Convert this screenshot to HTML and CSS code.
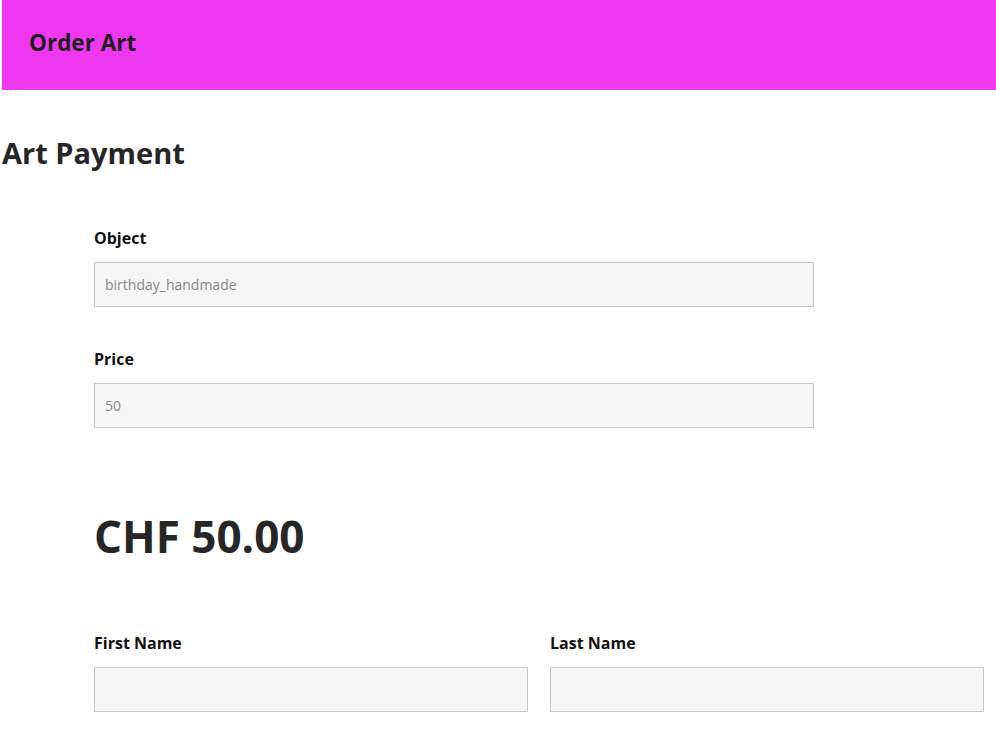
FILE: index.html
```html
<!DOCTYPE html>
<html lang="en">
<head>
  <meta charset="UTF-8">
  <meta name="viewport" content="width=device-width, initial-scale=1.0">
  <title>Order Art</title>
  <link rel="stylesheet" href="styles.css">
</head>
<body>
  <header class="topbar">
    <span class="topbar-title">Order Art</span>
  </header>

  <main class="page">
    <h1 class="page-title">Art Payment</h1>

    <form class="payment-form">
      <div class="field">
        <label for="object">Object</label>
        <input type="text" id="object" value="birthday_handmade" readonly>
      </div>

      <div class="field">
        <label for="price">Price</label>
        <input type="text" id="price" value="50" readonly>
      </div>

      <div class="amount">CHF 50.00</div>

      <!-- Dados do comprador -->
      <div class="name-row">
        <div class="field">
          <label for="firstName">First Name</label>
          <input type="text" id="firstName">
        </div>
        <div class="field">
          <label for="lastName">Last Name</label>
          <input type="text" id="lastName">
        </div>
      </div>
    </form>
  </main>
</body>
</html>
```

FILE: styles.css
```css
body {
  margin: 0;
  padding: 0;
  font-family: 'Open Sans', 'Liberation Sans', sans-serif;
  background-color: white;
  color: #262626;
}
.topbar {
  margin-left: 2px;
  height: 90px;
  padding: 31px 27px 0;
  box-sizing: border-box;
  background-color: #f037f0;
}
.topbar-title {
  display: block;
  font-size: 22.5px;
  line-height: 23px;
  font-weight: bold;
  color: #1f1f1f;
}
.page {
  padding-left: 2px;
}
.page-title {
  margin: 45px 0 0;
  font-size: 29px;
  line-height: 36px;
  font-weight: bold;
}
.payment-form {
  margin-left: 92px;
  padding-top: 56px;
}
.field {
  width: 720px;
  margin-bottom: 41px;
}
label {
  display: block;
  margin-bottom: 13px;
  font-size: 16px;
  line-height: 22px;
  font-weight: bold;
  color: #111;
}
input {
  display: block;
  width: 100%;
  height: 45px;
  padding: 0 10px;
  border: 1px solid #c8c8c8;
  background-color: #f6f6f6;
  font-family: inherit;
  font-size: 14px;
  color: #888;
  outline: none;
  box-sizing: border-box;
}
.amount {
  margin: 78px 0 66px;
  font-size: 44px;
  line-height: 60px;
  font-weight: bold;
}
.name-row {
  display: grid;
  grid-template-columns: 434px 434px;
  column-gap: 22px;
}
.name-row .field {
  width: auto;
}
```
